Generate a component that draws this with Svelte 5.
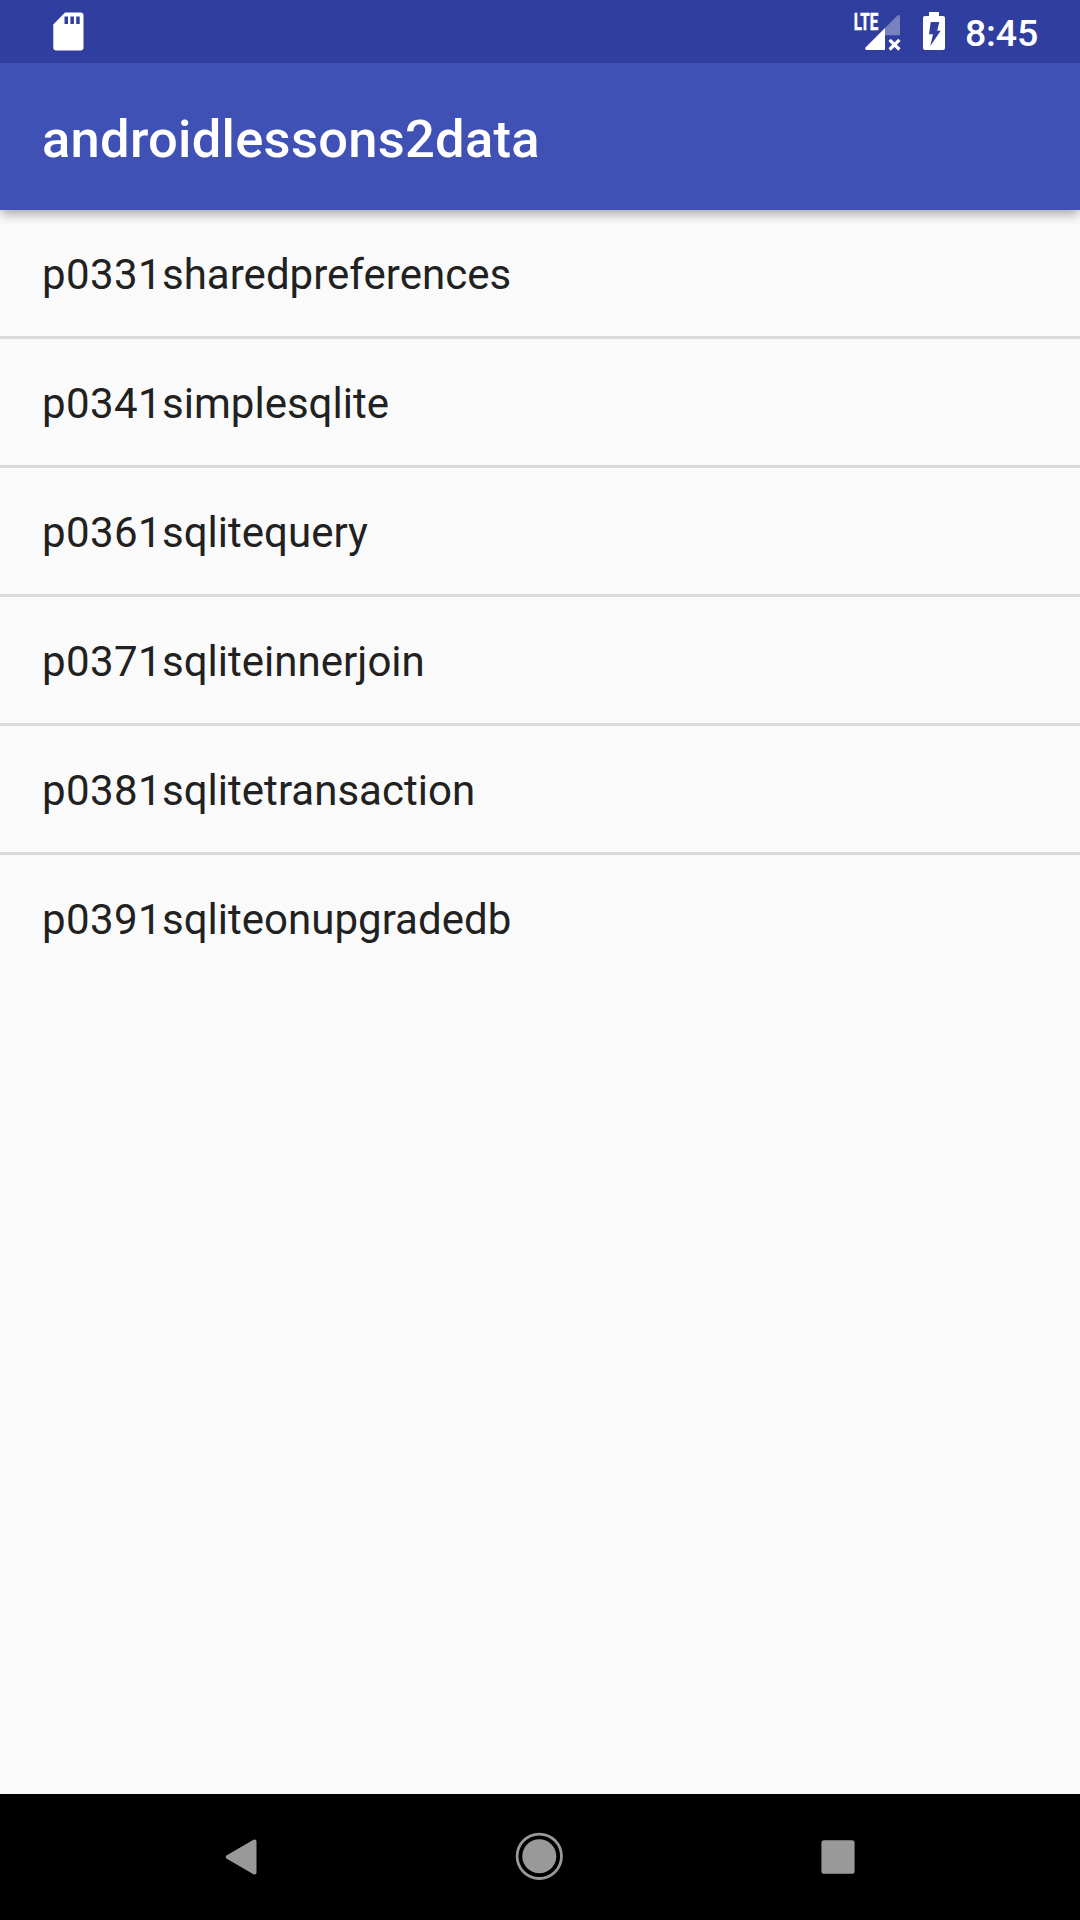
<script>
  const lessons = [
    ['p0331', 'sharedpreferences'],
    ['p0341', 'simplesqlite'],
    ['p0361', 'sqlitequery'],
    ['p0371', 'sqliteinnerjoin'],
    ['p0381', 'sqlitetransaction'],
    ['p0391', 'sqliteonupgradedb']
  ];
</script>

<div class="screen">
  <div class="status">
    <svg width="72" height="63" viewBox="0 0 72 63">
      <path fill="#fff" fill-rule="evenodd" d="M29 12.5H44.5Q47.5 12.5 47.5 15.5V47.5Q47.5 50.5 44.5 50.5H20.3Q17.3 50.5 17.3 47.5V24.5ZM28.5 16.5V24H32V16.5ZM34.4 16.5V24H37.9V16.5ZM40.2 16.5V24H43.7V16.5Z" />
    </svg>
    <span class="grow"></span>
    <svg width="110" height="63" viewBox="850 0 110 63">
      <text class="lte" x="853.8" y="30" textLength="24.5" lengthAdjust="spacingAndGlyphs">LTE</text>
      <path fill="#fff" d="M885 28V50H866.2Q864.3 49 865.5 47.5Z" />
      <path fill="#fff" fill-opacity=".35" d="M885 28L897.5 15.5Q900 14 900 17V35.2H885Z" />
      <path stroke="#fff" stroke-width="3.2" d="M889.6 39.9L899.4 49.5M899.4 39.9L889.6 49.5" />
      <path fill="#fff" fill-rule="evenodd" d="M929 12H939V16H943Q945 16 945 18V48Q945 50 943 50H925Q923 50 923 48V18Q923 16 925 16H929ZM930.7 22L929 34.3H933L930.3 46L940.7 30.7H937.2L939.3 22Z" />
    </svg>
    <span class="time">8:45</span>
  </div>
  <header>androidlessons2data</header>
  <main>
    {#each lessons as [code, name]}
      <div class="row"><span class="code">{code}</span>{name}</div>
    {/each}
  </main>
  <nav>
    <svg width="298" height="126" viewBox="93 1794 298 126">
      <path fill="#999" stroke="#999" stroke-width="4" stroke-linejoin="round" d="M227.8 1857L254.5 1841.5V1872.5Z" />
    </svg>
    <svg width="298" height="126" viewBox="391 1794 298 126">
      <circle cx="539.3" cy="1856.3" r="17" fill="#999" />
      <circle cx="539.3" cy="1856.3" r="22.2" fill="none" stroke="#999" stroke-width="2.8" />
    </svg>
    <svg width="298" height="126" viewBox="689 1794 298 126">
      <rect x="821.4" y="1840.3" width="33.2" height="33.4" rx="2.5" fill="#999" />
    </svg>
  </nav>
</div>

<style>
  :global(body) { margin: 0; }
  .screen { width: 1080px; height: 1920px; display: flex; flex-direction: column; background: #fafafa; font-family: Roboto, sans-serif; color: #212121; overflow: hidden; }
  .status { height: 63px; background: #303f9f; color: #fff; display: flex; flex: none; padding: 0 42px 0 36px; box-sizing: border-box; z-index: 2; }
  .status svg { flex: none; }
  .grow { flex: 1; }
  .lte { font-family: Roboto, sans-serif; font-size: 23px; font-weight: 700; fill: #fff; stroke: #fff; stroke-width: .5px; }
  .time { width: 78px; text-align: right; font-size: 37.5px; font-weight: 500; line-height: 67px; letter-spacing: -.2px; }
  header { height: 147px; flex: none; background: #3f51b5; color: #fff; font-size: 52.5px; font-weight: 500; line-height: 152px; letter-spacing: .26px; padding-left: 42px; box-shadow: 0 5px 11px -1px rgba(0,0,0,.34); z-index: 1; }
  main { flex: 1; }
  .row { height: 126px; line-height: 130px; font-size: 42px; letter-spacing: .02px; padding-left: 42px; border-bottom: 3px solid #dadada; }
  .row:last-child { border: 0; }
  .code { letter-spacing: .4px; }
  nav { height: 126px; background: #000; display: flex; justify-content: center; }
</style>
